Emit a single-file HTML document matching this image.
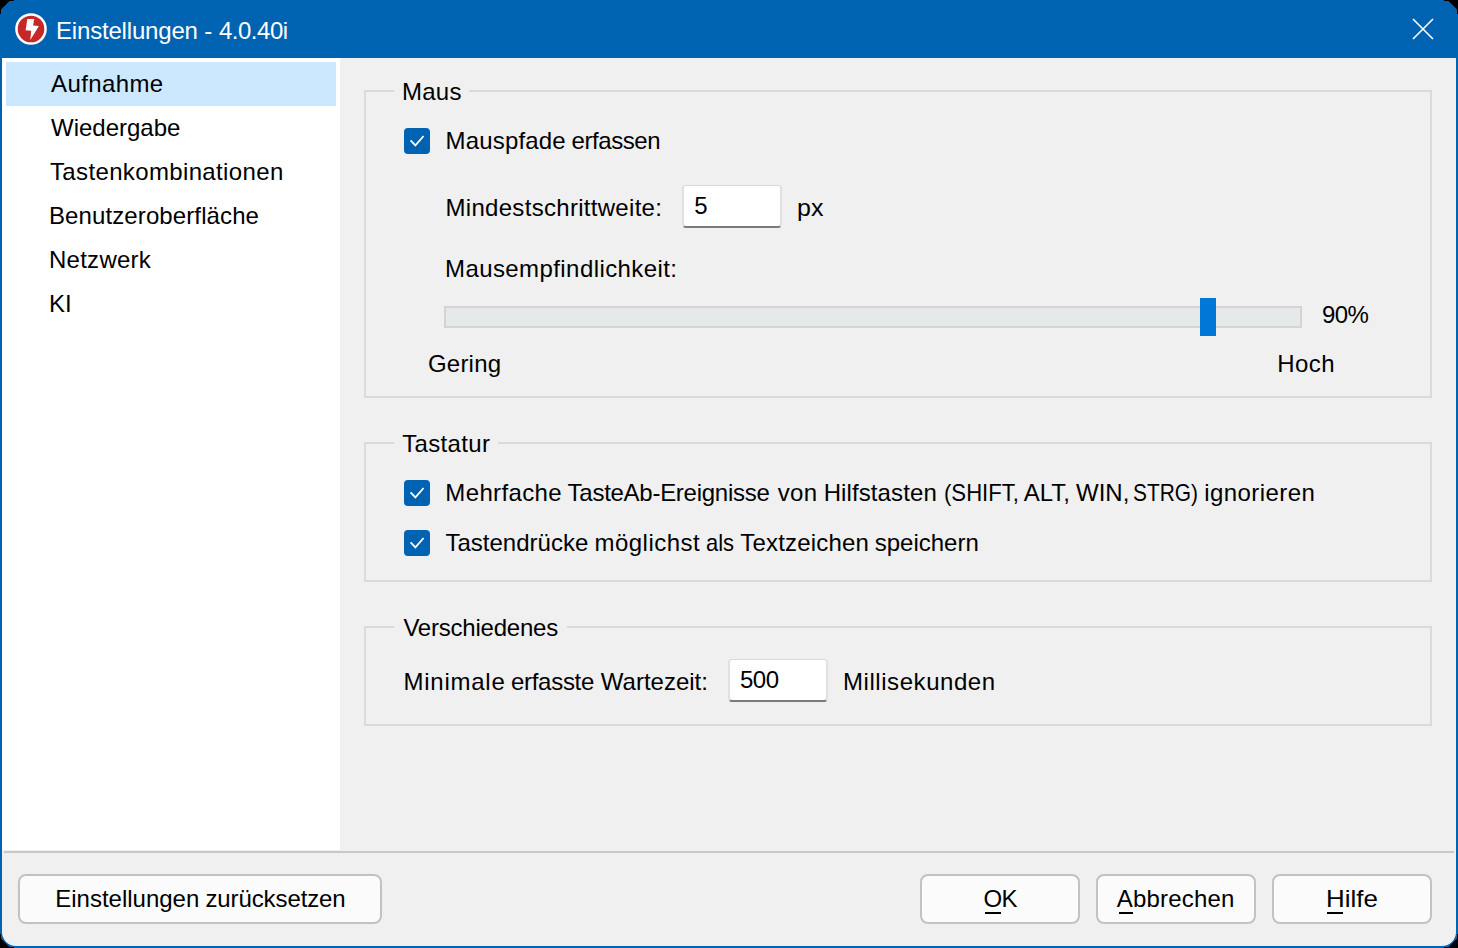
<!DOCTYPE html>
<html><head><meta charset="utf-8">
<style>
*{margin:0;padding:0;box-sizing:border-box}
html,body{width:1458px;height:948px;overflow:hidden;background:#000}
body{font-family:"Liberation Sans",sans-serif;font-size:24px;line-height:24px;color:#000;position:relative}
.win{position:absolute;left:0;top:0;width:1458px;height:948px;background:#0063b1;overflow:hidden;clip-path:polygon(14px 0px,1444px 0px,1444px 1px,1448.5px 1px,1457px 9.5px,1457px 14px,1458px 14px,1458px 934px,1457px 934px,1457px 938.5px,1448.5px 947px,1444px 947px,1444px 948px,14px 948px,14px 947px,9.5px 947px,1px 938.5px,1px 934px,0px 934px,0px 14px,1px 14px,1px 9.5px,9.5px 1px,14px 1px)}
.t{position:absolute;white-space:nowrap;line-height:24px}
.side{position:absolute;left:2px;top:58px;width:338px;height:792px;background:#fff}
.panel{position:absolute;left:340px;top:58px;width:1116px;height:793px;background:#f0f0f0}
.foot{position:absolute;left:2px;top:850px;width:1454px;height:96px;background:#f0f0f0;border-radius:0 0 14px 14px}
.sep{position:absolute;left:4px;top:851px;width:1450px;height:2px;background:#c8c8c8}
.sel{position:absolute;left:6px;top:62px;width:330px;height:44px;background:#cce8ff}
.grp{position:absolute;border:2px solid #dadada}
.leg{position:absolute;background:#f0f0f0;height:4px}
.cb{position:absolute;width:26px;height:26px;background:#0063b1;border-radius:4px}
.cb svg{position:absolute;left:0;top:0}
.tb{position:absolute;background:#fff;border:1px solid #d9d9d9;border-left-width:2px;border-right-width:2px;border-left-color:#e0e0e0;border-right-color:#e0e0e0;border-bottom:2px solid #7a7a7a;border-radius:4px}
.btn{position:absolute;top:874px;height:50px;background:#fbfbfb;border:2px solid #c2c2c2;border-radius:8px}
.u{position:absolute;height:2px;background:#000;top:912px}
</style></head><body>
<div class="win">
  <svg style="position:absolute;left:0;top:0" width="60" height="58" viewBox="0 0 60 58">
    <circle cx="31" cy="29" r="15.8" fill="#fff"/>
    <circle cx="31" cy="29" r="13.3" fill="#c62828"/>
    <path d="M27.3 19.1 L34.2 19.1 L33.1 25.6 L38.9 26.1 L30.3 40 L31.2 30.7 L25.6 30.3 Z" fill="#fff"/>
  </svg>
  <svg style="position:absolute;left:1410px;top:16px" width="26" height="26" viewBox="0 0 26 26">
    <path d="M3 3 L23 23 M23 3 L3 23" stroke="#fff" stroke-width="1.6" fill="none"/>
  </svg>
  <div class="side"></div>
  <div class="sel"></div>
  <div class="panel"></div>

  <div class="grp" style="left:364px;top:90px;width:1068px;height:308px"></div>
  <div class="leg" style="left:394px;top:89px;width:75px"></div>
  <div class="cb" style="left:404px;top:128px"><svg width="26" height="26"><path d="M6.6 12.3 L11.4 17.3 L19.6 8.0" stroke="#fff" stroke-width="1.8" fill="none"/></svg></div>
  <div class="tb" style="left:682px;top:185px;width:100px;height:43px"></div>
  <div style="position:absolute;left:444px;top:306px;width:858px;height:22px;background:#e6e9e9;border:2px solid #d4d4d4"></div>
  <div style="position:absolute;left:1200px;top:298px;width:16px;height:38px;background:#0078d7"></div>

  <div class="grp" style="left:364px;top:442px;width:1068px;height:140px"></div>
  <div class="leg" style="left:394px;top:441px;width:104px"></div>
  <div class="cb" style="left:404px;top:480px"><svg width="26" height="26"><path d="M6.6 12.3 L11.4 17.3 L19.6 8.0" stroke="#fff" stroke-width="1.8" fill="none"/></svg></div>
  <div class="cb" style="left:404px;top:530px"><svg width="26" height="26"><path d="M6.6 12.3 L11.4 17.3 L19.6 8.0" stroke="#fff" stroke-width="1.8" fill="none"/></svg></div>

  <div class="grp" style="left:364px;top:626px;width:1068px;height:100px"></div>
  <div class="leg" style="left:394px;top:625px;width:173px"></div>
  <div class="tb" style="left:728px;top:659px;width:100px;height:43px"></div>

  <div class="foot"></div>
  <div class="sep"></div>
  <div class="btn" style="left:18px;width:364px"></div>
  <div class="btn" style="left:920px;width:160px"></div>
  <div class="btn" style="left:1096px;width:160px"></div>
  <div class="btn" style="left:1272px;width:160px"></div>
  <div class="u" style="left:985px;width:16px"></div>
  <div class="u" style="left:1119px;width:14px"></div>
  <div class="u" style="left:1327px;width:16px"></div>

<div class="t" style="left:56.0px;top:19px;letter-spacing:-0.183px;color:#fff">Einstellungen</div>
<div class="t" style="left:204.3px;top:19px;color:#fff">-</div>
<div class="t" style="left:219.0px;top:19px;letter-spacing:-0.500px;color:#fff">4.0.40i</div>
<div class="t" style="left:51.0px;top:72px;letter-spacing:0.386px">Aufnahme</div>
<div class="t" style="left:51.0px;top:116px">Wiedergabe</div>
<div class="t" style="left:50.0px;top:160px;letter-spacing:0.356px">Tastenkombinationen</div>
<div class="t" style="left:49.0px;top:204px;letter-spacing:0.106px">Benutzeroberfläche</div>
<div class="t" style="left:49.0px;top:248px;letter-spacing:0.257px">Netzwerk</div>
<div class="t" style="left:49.0px;top:292px">KI</div>
<div class="t" style="left:402.0px;top:80px;letter-spacing:0.233px">Maus</div>
<div class="t" style="left:445.6px;top:129px;letter-spacing:0.150px">Mauspfade</div>
<div class="t" style="left:571.5px;top:129px;letter-spacing:-0.429px">erfassen</div>
<div class="t" style="left:445.5px;top:196px;letter-spacing:0.300px">Mindestschrittweite:</div>
<div class="t" style="left:694.2px;top:194px">5</div>
<div class="t" style="left:797.4px;top:196px;transform:scaleX(1.0409);transform-origin:0 0">px</div>
<div class="t" style="left:445.0px;top:257px;letter-spacing:0.416px">Mausempfindlichkeit:</div>
<div class="t" style="left:1322.0px;top:303px;letter-spacing:-0.650px">90%</div>
<div class="t" style="left:428.0px;top:352px;letter-spacing:0.200px">Gering</div>
<div class="t" style="left:1277.2px;top:352px;letter-spacing:0.433px">Hoch</div>
<div class="t" style="left:402.2px;top:432px;letter-spacing:0.343px">Tastatur</div>
<div class="t" style="left:445.3px;top:481px;letter-spacing:0.375px">Mehrfache</div>
<div class="t" style="left:567.6px;top:481px;letter-spacing:-0.271px">TasteAb-Ereignisse</div>
<div class="t" style="left:777.7px;top:481px;letter-spacing:0.350px">von</div>
<div class="t" style="left:823.7px;top:481px;letter-spacing:0.100px">Hilfstasten</div>
<div class="t" style="left:944.1px;top:481px;transform:scaleX(0.9221);transform-origin:0 0">(SHIFT,</div>
<div class="t" style="left:1023.7px;top:481px">ALT,</div>
<div class="t" style="left:1076.0px;top:481px">WIN,</div>
<div class="t" style="left:1133.3px;top:481px;transform:scaleX(0.8704);transform-origin:0 0">STRG)</div>
<div class="t" style="left:1204.2px;top:481px;letter-spacing:0.444px">ignorieren</div>
<div class="t" style="left:445.5px;top:531px">Tastendrücke</div>
<div class="t" style="left:594.5px;top:531px;letter-spacing:0.475px">möglichst</div>
<div class="t" style="left:706.1px;top:531px;transform:scaleX(0.9143);transform-origin:0 0">als</div>
<div class="t" style="left:740.3px;top:531px;letter-spacing:0.180px">Textzeichen</div>
<div class="t" style="left:874.7px;top:531px">speichern</div>
<div class="t" style="left:403.4px;top:616px;letter-spacing:-0.225px">Verschiedenes</div>
<div class="t" style="left:403.5px;top:670px;letter-spacing:0.743px">Minimale</div>
<div class="t" style="left:510.9px;top:670px;letter-spacing:-0.271px">erfasste</div>
<div class="t" style="left:600.8px;top:670px">Wartezeit:</div>
<div class="t" style="left:740.0px;top:668px;letter-spacing:-0.500px">500</div>
<div class="t" style="left:843.0px;top:670px;letter-spacing:0.558px">Millisekunden</div>
<div class="t" style="left:55.2px;top:887px">Einstellungen</div>
<div class="t" style="left:205.4px;top:887px;letter-spacing:-0.100px">zurücksetzen</div>
<div class="t" style="left:983.5px;top:887px;letter-spacing:-0.700px">OK</div>
<div class="t" style="left:1116.8px;top:887px;letter-spacing:0.175px">Abbrechen</div>
<div class="t" style="left:1326.0px;top:887px;transform:scaleX(1.0795);transform-origin:0 0">Hilfe</div>
</div>
</body></html>
